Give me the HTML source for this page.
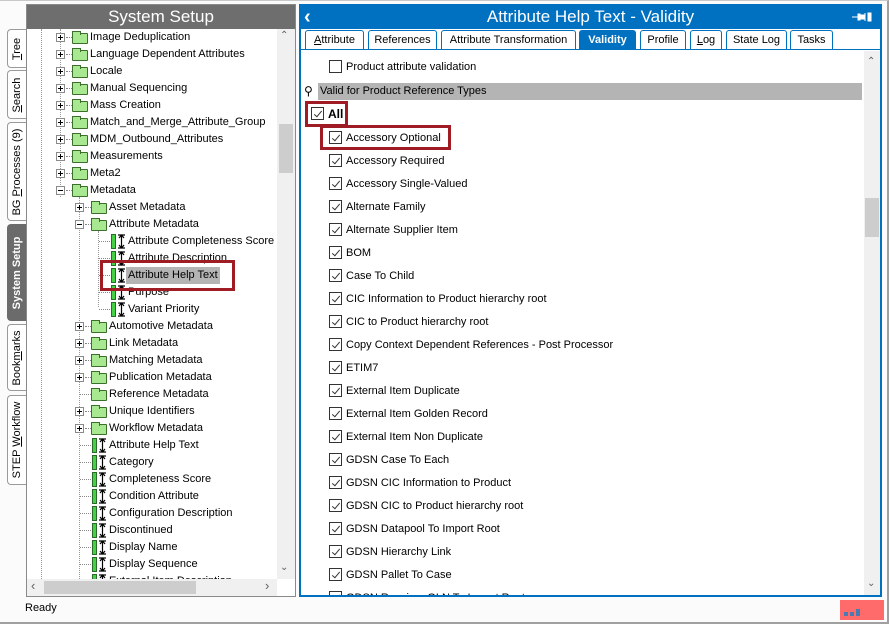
<!DOCTYPE html>
<html><head><meta charset="utf-8"><style>
*{margin:0;padding:0;box-sizing:border-box}
body{width:889px;height:624px;background:#fbfbfb;font-family:"Liberation Sans","DejaVu Sans",sans-serif;font-size:11px;color:#000;position:relative;overflow:hidden}
.abs{position:absolute}
.vt{position:absolute;left:7px;width:19px;border:1px solid #9a9a9a;border-right:none;border-radius:4px 0 0 4px;background:#fff}
.vt span{position:absolute;left:50%;top:50%;transform:translate(-50%,-50%) rotate(-90deg);white-space:nowrap;font-size:11px}
.row{position:absolute;height:17px;line-height:17px;white-space:nowrap}
.pm{position:absolute;width:9px;height:9px;border:1px solid #8a8a8a;background:#fff;top:4px}
.pm:before{content:"";position:absolute;left:1px;top:3px;width:5px;height:1px;background:#000}
.pm.p:after{content:"";position:absolute;left:3px;top:1px;width:1px;height:5px;background:#000}
.fd{position:absolute;top:4px;width:16px;height:11px;border:1px solid #3c6e2c;background:#a8e890;border-radius:1px}
.fd:before{content:"";position:absolute;left:-1px;top:-3px;width:7px;height:3px;border:1px solid #3c6e2c;border-bottom:none;background:#a8e890}
.at{position:absolute;top:1px;width:5px;height:15px;border:1px solid #2a6a2a;background:#46d046}
.ar{position:absolute;top:1px;width:7px;height:15px}
.dh{position:absolute;top:8px;height:1px;border-top:1px dotted #888}
.cb{position:absolute;width:13px;height:13px;border:1px solid #333;background:#fff}
.cb.c:after{content:"";position:absolute;left:4px;top:1px;width:3px;height:7px;border:solid #333;border-width:0 1px 1px 0;transform:rotate(40deg)}
.li{position:absolute;left:329px;height:16px;line-height:16px;white-space:nowrap}
.li .cb{left:0;top:1px}
.li span{position:absolute;left:17px;top:0}
.tab{position:absolute;top:30px;height:20px;border:1px solid #0070c0;border-bottom:none;border-radius:3px 3px 0 0;background:#fff;text-align:center;line-height:18px;font-size:11px}
</style></head><body>
<div class="abs" style="left:0;top:0;width:889px;height:624px;border-right:2px solid #a0a0a0;border-bottom:2px solid #a0a0a0;border-top:1px solid #c8c8c8"></div>
<div class="vt" style="top:29px;height:39px"><span><u>T</u>ree</span></div>
<div class="vt" style="top:70px;height:49px"><span><u>S</u>earch</span></div>
<div class="vt" style="top:122px;height:99px"><span>BG <u>P</u>rocesses (9)</span></div>
<div class="vt" style="top:224px;height:97px;background:#6b6b6b;border-color:#6b6b6b"><span style="color:#fff;font-weight:bold">System Setup</span></div>
<div class="vt" style="top:324px;height:67px"><span>Book<u>m</u>arks</span></div>
<div class="vt" style="top:395px;height:90px"><span>STEP <u>W</u>orkflow</span></div>

<div class="abs" style="left:26px;top:4px;width:270px;height:593px;border:1px solid #8a8a8a;background:#fff"></div>
<div class="abs" style="left:27px;top:5px;width:268px;height:24px;background:#6e6e6e;color:#fff;font-size:17px;text-align:center;line-height:24px">System Setup</div>
<div class="abs" style="left:27px;top:29px;width:250px;height:550px;overflow:hidden">
<div style="position:absolute;left:14px;top:0;height:560px;border-left:1px dotted #999"></div>
<div style="position:absolute;left:33px;top:0;height:168px;border-left:1px dotted #999"></div>
<div style="position:absolute;left:52px;top:168px;height:400px;border-left:1px dotted #999"></div>
<div style="position:absolute;left:71px;top:202px;height:76px;border-left:1px dotted #999"></div>
</div>
<div id="tree" class="abs" style="left:27px;top:29px;width:250px;height:550px;overflow:hidden"></div>
<div class="abs" style="left:100px;top:260px;width:135px;height:31px;border:3px solid #a01c24"></div>
<div class="abs" style="left:277px;top:29px;width:18px;height:550px;background:#f0f0f0"></div>
<div class="abs" style="left:279px;top:124px;width:14px;height:49px;background:#cdcdcd"></div>
<div class="abs" style="left:280px;top:30px;color:#606060;font-size:10px">&#8963;</div>
<div class="abs" style="left:280px;top:562px;color:#606060;font-size:10px">&#8964;</div>
<div class="abs" style="left:27px;top:579px;width:250px;height:17px;background:#f0f0f0"></div>
<div class="abs" style="left:44px;top:581px;width:152px;height:13px;background:#cdcdcd"></div>
<div class="abs" style="left:31px;top:578px;color:#606060;font-size:13px">&#8249;</div>
<div class="abs" style="left:265px;top:578px;color:#606060;font-size:13px">&#8250;</div>

<div class="abs" style="left:299px;top:4px;width:583px;height:593px;border:2px solid #0070c0;background:#fff"></div>
<div class="abs" style="left:299px;top:4px;width:583px;height:25px;background:#0070c0;color:#fff;font-size:17px;text-align:center;line-height:26px">Attribute Help Text - Validity</div>
<div class="abs" style="left:304px;top:5px;color:#fff;font-size:20px;font-weight:bold;line-height:24px">&#8249;</div>
<div class="abs" style="left:851px;top:11px;width:22px;height:12px">
<svg width="22" height="12"><path d="M1 6h6M7 3h2v6h-2zM9 4h5v4h-5zM14 2v8M17 2h3v8h-3z" fill="#fff" stroke="#fff" stroke-width="1"/></svg></div>
<div class="tab" style="left:305px;width:59px"><u>A</u>ttribute</div>
<div class="tab" style="left:368px;width:69px">References</div>
<div class="tab" style="left:441px;width:135px">Attribute Transformation</div>
<div class="tab" style="left:579px;width:57px;background:#0070c0;color:#fff;font-weight:bold">Validity</div>
<div class="tab" style="left:640px;width:46px">Profile</div>
<div class="tab" style="left:690px;width:32px"><u>L</u>og</div>
<div class="tab" style="left:726px;width:61px">State Log</div>
<div class="tab" style="left:790px;width:43px">Tasks</div>
<div class="abs" style="left:301px;top:49px;width:579px;height:1px;background:#0070c0"></div>
<div class="abs" style="left:864px;top:51px;width:16px;height:544px;background:#f0f0f0"></div>
<div class="abs" style="left:865px;top:198px;width:14px;height:39px;background:#cdcdcd"></div>
<div class="abs" style="left:867px;top:56px;color:#606060;font-size:10px">&#8963;</div>
<div class="abs" style="left:867px;top:578px;color:#606060;font-size:10px">&#8964;</div>

<div class="li" style="top:59px"><div class="cb"></div><span>Product attribute validation</span></div>
<div class="abs" style="left:318px;top:83px;width:544px;height:17px;background:#b4b4b4"></div>
<div class="abs" style="left:304px;top:83px;font-size:12px;line-height:17px">&#9906;</div>
<div class="abs" style="left:320px;top:83px;line-height:17px">Valid for Product Reference Types</div>
<div class="li" style="left:311px;top:106px"><div class="cb c"></div><span style="font-weight:bold;font-size:12px">All</span></div>
<div class="abs" style="left:305px;top:101px;width:43px;height:26px;border:3px solid #a01c24"></div>
<div class="abs" style="left:320px;top:125px;width:131px;height:25px;border:3px solid #a01c24"></div>
<div id="list"></div>

<div class="abs" style="left:25px;top:602px;font-size:11px">Ready</div>
<div class="abs" style="left:840px;top:600px;width:44px;height:20px;background:#ff6b6b"></div>
<div class="abs" style="left:844px;top:612px;width:4px;height:4px;background:#4a7ab0"></div>
<div class="abs" style="left:850px;top:612px;width:4px;height:4px;background:#4a7ab0"></div>
<div class="abs" style="left:856px;top:609px;width:4px;height:7px;background:#4a7ab0"></div>

<script>
var T=[["Image Deduplication",0,"p","f"],["Language Dependent Attributes",0,"p","f"],["Locale",0,"p","f"],["Manual Sequencing",0,"p","f"],["Mass Creation",0,"p","f"],["Match_and_Merge_Attribute_Group",0,"p","f"],["MDM_Outbound_Attributes",0,"p","f"],["Measurements",0,"p","f"],["Meta2",0,"p","f"],["Metadata",0,"m","f"],["Asset Metadata",1,"p","f"],["Attribute Metadata",1,"m","f"],["Attribute Completeness Score",2,"","a"],["Attribute Description",2,"","a"],["Attribute Help Text",2,"","a",1],["Purpose",2,"","a"],["Variant Priority",2,"","a"],["Automotive Metadata",1,"p","f"],["Link Metadata",1,"p","f"],["Matching Metadata",1,"p","f"],["Publication Metadata",1,"p","f"],["Reference Metadata",1,"","f"],["Unique Identifiers",1,"p","f"],["Workflow Metadata",1,"p","f"],["Attribute Help Text",1,"","a"],["Category",1,"","a"],["Completeness Score",1,"","a"],["Condition Attribute",1,"","a"],["Configuration Description",1,"","a"],["Discontinued",1,"","a"],["Display Name",1,"","a"],["Display Sequence",1,"","a"],["External Item Description",1,"","a"]];
var arrow='<svg width="7" height="15"><path d="M0 1h7M0 14h7M3.5 1v13M1 4l2.5-3 2.5 3M1 11l2.5 3 2.5-3" fill="none" stroke="#000" stroke-width="1.2"/></svg>';
var h="";
T.forEach(function(t,i){
 var y=i*17, base=[33,52,71][t[1]];
 var r='<div class="row" style="top:'+y+'px;left:0;width:260px">';
 if(t[2]) r+='<div class="pm '+(t[2]=="p"?"p":"")+'" style="left:'+(base-4)+'px"></div><div class="dh" style="left:'+(base+6)+'px;width:6px"></div>';
 else r+='<div class="dh" style="left:'+(base+1)+'px;width:11px"></div>';
 var ix=base+12;
 if(t[3]=="f") r+='<div class="fd" style="left:'+ix+'px"></div>';
 else r+='<div class="at" style="left:'+(ix+1)+'px"></div><div class="ar" style="left:'+(ix+8)+'px">'+arrow+'</div>';
 var tx=base+30;
 r+='<span style="position:absolute;left:'+tx+'px;'+(t[4]?'background:#b4b4b4;padding:0 2px;margin-left:-2px':'')+'">'+t[0]+'</span></div>';
 h+=r;});
document.getElementById("tree").innerHTML=h;
var L=["Accessory Optional","Accessory Required","Accessory Single-Valued","Alternate Family","Alternate Supplier Item","BOM","Case To Child","CIC Information to Product hierarchy root","CIC to Product hierarchy root","Copy Context Dependent References - Post Processor","ETIM7","External Item Duplicate","External Item Golden Record","External Item Non Duplicate","GDSN Case To Each","GDSN CIC Information to Product","GDSN CIC to Product hierarchy root","GDSN Datapool To Import Root","GDSN Hierarchy Link","GDSN Pallet To Case","GDSN Receiver GLN To Import Root"];
var s='<div class="abs" style="left:301px;top:50px;width:563px;height:545px;overflow:hidden">';
L.forEach(function(t,i){s+='<div class="li" style="left:28px;top:'+(80+i*23)+'px"><div class="cb c"></div><span>'+t+'</span></div>';});
document.getElementById("list").innerHTML=s+'</div>';
</script>
</body></html>
